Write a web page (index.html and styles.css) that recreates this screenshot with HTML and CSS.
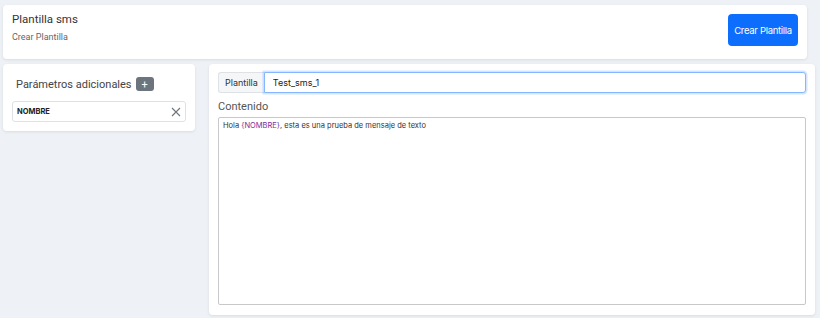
FILE: index.html
```html
<!DOCTYPE html>
<html lang="es">
<head>
    <meta charset="UTF-8">
    <title>Plantilla sms</title>
    <link rel="stylesheet" href="styles.css">
</head>
<body>
    <div class="header-card">
        <div class="header-text">
            <h1>Plantilla sms</h1>
            <div class="subtitle">Crear Plantilla</div>
        </div>
        <button class="btn-primary">Crear Plantilla</button>
    </div>
    <div class="content-row">
        <div class="card params-card">
            <div class="params-title">
                Parámetros adicionales
                <span class="badge-add">+</span>
            </div>
            <div class="param-item">
                <span class="param-name">NOMBRE</span>
                <svg class="param-remove" width="10" height="10" viewBox="0 0 10 10">
                    <path d="M1 1L9 9M9 1L1 9" stroke="#6c757d" stroke-width="1.1" fill="none"/>
                </svg>
            </div>
        </div>
        <div class="card editor-card">
            <div class="input-group">
                <span class="input-addon">Plantilla</span>
                <input class="input-name" type="text" value="Test_sms_1">
            </div>
            <div class="field-label">Contenido</div>
            <div class="textarea">Hola <span class="var">{NOMBRE}</span>, esta es una prueba de mensaje de texto</div>
        </div>
    </div>
</body>
</html>
```
FILE: styles.css
```css
body {
    margin: 0;
    padding: 5px 5px 0 3px;
    background: #eef1f5;
    font-family: Roboto, 'Liberation Sans', sans-serif;
    color: #333;
    height: 318px;
    box-sizing: border-box;
    overflow: hidden;
}
.header-card {
    display: flex;
    justify-content: space-between;
    align-items: flex-start;
    background: #fff;
    border-radius: 4px;
    box-shadow: 0 1px 3px rgba(30,40,70,0.10);
    height: 54px;
    box-sizing: border-box;
    padding: 9px 9px 0 9px;
    width: 804px;
}
h1 {
    margin: 0;
    font-size: 11.5px;
    font-weight: 400;
    color: #333;
    line-height: 14px;
    margin-top: -2px;
}
.subtitle {
    font-size: 9px;
    color: #666;
    margin-top: 6px;
}
.btn-primary {
    background: #0d6efd;
    color: #fff;
    border: none;
    border-radius: 4px;
    font-family: Inter, sans-serif;
    font-size: 9.5px;
    letter-spacing: -0.3px;
    width: 70px;
    height: 32px;
    padding: 0;
    cursor: pointer;
}
.content-row {
    display: flex;
    gap: 14px;
    margin-top: 5px;
    align-items: flex-start;
}
.card {
    background: #fff;
    border-radius: 4px;
    box-shadow: 0 1px 3px rgba(30,40,70,0.10);
    box-sizing: border-box;
}
.params-card {
    width: 192px;
    height: 67px;
    padding: 12px 9px 0 9px;
}
.params-title {
    display: flex;
    align-items: center;
    gap: 4px;
    font-size: 11px;
    color: #444;
    padding-left: 4px;
    height: 16px;
}
.badge-add {
    display: inline-flex;
    align-items: center;
    justify-content: center;
    background: #6c757d;
    color: #fff;
    border-radius: 3px;
    width: 18px;
    height: 14px;
    font-size: 11px;
    line-height: 1;
}
.param-item {
    display: flex;
    justify-content: space-between;
    align-items: center;
    margin-top: 9px;
    height: 21px;
    border: 1px solid #dee2e6;
    border-radius: 3px;
    padding: 0 4px 0 4px;
    box-sizing: border-box;
}
.param-name {
    font-family: Inter, sans-serif;
    font-size: 7.5px;
    font-weight: 700;
    color: #222;
}
.editor-card {
    width: 606px;
    height: 251px;
    padding: 8px 9px 0 9px;
}
.input-group {
    display: flex;
    height: 21px;
}
.input-addon {
    display: flex;
    align-items: center;
    padding: 0 6px;
    background: #f5f6f8;
    border: 1px solid #dee2e6;
    border-right: none;
    border-radius: 3px 0 0 3px;
    font-family: Inter, sans-serif;
    font-size: 9px;
    color: #333;
}
.input-name {
    flex: 1;
    margin: 0;
    border: 1px solid #86b7fe;
    box-shadow: 0 0 0 1.5px rgba(13,110,253,0.18);
    border-radius: 0 3px 3px 0;
    outline: none;
    padding: 0 8px;
    font-family: Inter, sans-serif;
    font-size: 9px;
    color: #222;
    height: 21px;
    box-sizing: border-box;
}
.field-label {
    font-size: 11px;
    color: #555;
    margin-top: 7px;
    height: 14px;
}
.textarea {
    margin-top: 3px;
    height: 188px;
    border: 1px solid #c8c8c8;
    border-radius: 2px;
    padding: 3px 4px;
    box-sizing: border-box;
    font-family: Inter, sans-serif;
    font-size: 7.5px;
    color: #333;
}
.var {
    color: #7b2d9e;
}
```
